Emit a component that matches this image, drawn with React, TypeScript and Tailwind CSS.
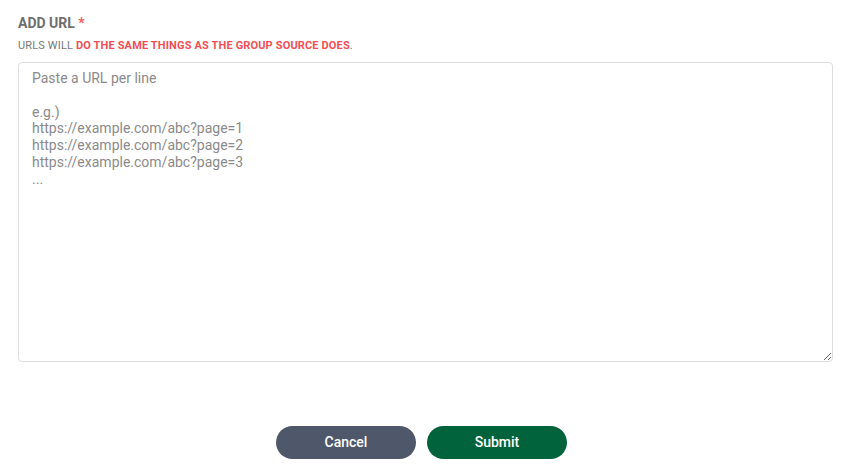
export default function App() {
  return (
    <div className="w-[845px] h-[470px] bg-white font-['Roboto',sans-serif] pl-[18px] pr-[12px] pt-[15px]">
      <label className="block text-[14px] font-bold text-[#6e6e6e] leading-[17px]">
        ADD URL <span className="text-[#f26060]">*</span>
      </label>
      <p className="mt-[7px] text-[11px] leading-[13px] tracking-[0.15px] text-[#777]">
        URLS WILL <span className="font-bold text-[#f04f55]">DO THE SAME THINGS AS THE GROUP SOURCE DOES</span>.
      </p>
      <textarea
        className="mt-[10px] block w-full h-[300px] rounded-[4px] border border-[#dddddd] px-[13px] py-[7px] text-[14px] leading-[16.8px] text-[#555] placeholder:text-[#8a8a8a] outline-none"
        placeholder={"Paste a URL per line\n\ne.g.)\nhttps://example.com/abc?page=1\nhttps://example.com/abc?page=2\nhttps://example.com/abc?page=3\n..."}
      />
      <div className="mt-[64px] flex justify-center gap-[11px] pr-[8px]">
        <button className="w-[140px] h-[33px] rounded-full bg-[#4f576a] text-white text-[14px] font-medium">
          Cancel
        </button>
        <button className="w-[140px] h-[33px] rounded-full bg-[#01633b] text-white text-[14px] font-medium">
          Submit
        </button>
      </div>
    </div>
  );
}
